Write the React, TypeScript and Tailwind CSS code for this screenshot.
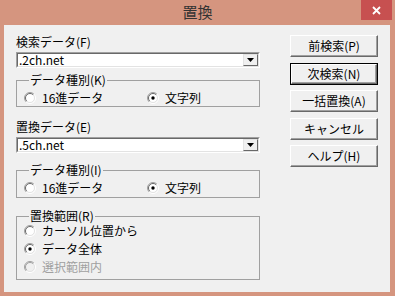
import React from "react";

const font = { fontFamily: '"Noto Sans CJK JP", "Noto Sans", sans-serif' };

function Radio({ checked, disabled }: { checked?: boolean; disabled?: boolean }) {
  return (
    <svg width="12" height="12" viewBox="0 0 12 12" className="shrink-0">
      <circle cx="6" cy="6" r="4.5" fill={disabled ? "#f0f0f0" : "#ffffff"} />
      <path d="M2.1 9.9 A5.5 5.5 0 0 1 9.9 2.1" fill="none" stroke="#a0a0a0" strokeWidth="1" />
      <path d="M9.9 2.1 A5.5 5.5 0 0 1 2.1 9.9" fill="none" stroke="#ffffff" strokeWidth="1" />
      <path d="M2.8 9.2 A4.5 4.5 0 0 1 9.2 2.8" fill="none" stroke={disabled ? "#a0a0a0" : "#696969"} strokeWidth="1" />
      <path d="M9.2 2.8 A4.5 4.5 0 0 1 2.8 9.2" fill="none" stroke="#e3e3e3" strokeWidth="1" />
      {checked && <circle cx="6" cy="6" r="1.7" fill="#000000" />}
    </svg>
  );
}

function Option({ label, checked, disabled }: { label: string; checked?: boolean; disabled?: boolean }) {
  return (
    <div className="flex items-center h-[14px]">
      <Radio checked={checked} disabled={disabled} />
      <span className={"ml-[6px] text-[12px] leading-[14px] " + (disabled ? "text-[#a0a0a0]" : "text-black")}>{label}</span>
    </div>
  );
}

function Combo({ value }: { value: string }) {
  return (
    <div className="h-[16px] w-[244px] flex border-t border-l border-t-[#a0a0a0] border-l-[#a0a0a0] border-b border-r border-b-white border-r-white">
      <div className="flex-1 flex bg-white border-t border-l border-t-[#696969] border-l-[#696969] border-b border-r border-b-[#e3e3e3] border-r-[#e3e3e3]">
        <span className="flex-1 pl-[1px] text-[12px] leading-[12px] text-black">{value}</span>
        <div className="w-[15px] h-[12px] bg-[#f0f0f0] flex items-center justify-center border-t border-l border-t-[#e3e3e3] border-l-[#e3e3e3] border-b border-r border-b-[#696969] border-r-[#696969]">
          <svg width="7" height="4" viewBox="0 0 7 4">
            <path d="M0 0 H7 L3.5 4 Z" fill="#000" />
          </svg>
        </div>
      </div>
    </div>
  );
}

function Group({ title, children, className }: { title: string; children: React.ReactNode; className?: string }) {
  return (
    <fieldset className={"w-[244px] border border-[#a0a0a0] pl-[7px] " + (className ?? "")}>
      <legend className="ml-[5px] px-[1px] text-[12px] leading-[14px] text-black">{title}</legend>
      {children}
    </fieldset>
  );
}

function Button({ label, isDefault }: { label: string; isDefault?: boolean }) {
  return (
    <div className={"w-[88px] h-[22px] " + (isDefault ? "border border-black" : "")}>
      <div className="w-full h-full flex items-center justify-center bg-[#f0f0f0] border-t border-l border-t-white border-l-white border-b border-r border-b-[#696969] border-r-[#696969] shadow-[inset_-1px_-1px_0_#a0a0a0]">
        <span className="text-[12px] leading-[14px] text-black">{label}</span>
      </div>
    </div>
  );
}

export default function App() {
  return (
    <div className="w-[395px] h-[296px] bg-[#d5957f] flex flex-col" style={font}>
      <div className="relative h-[25px] flex items-center justify-center">
        <span className="text-[15px] leading-[20px] text-[#333333] mt-[-1px]">置換</span>
        <div className="absolute top-0 right-[3px] w-[31px] h-[20px] bg-[#c75050] flex items-center justify-center">
          <svg width="9" height="9" viewBox="0 0 9 9">
            <path d="M1 1 L8 8 M8 1 L1 8" stroke="#ffffff" strokeWidth="1.8" />
          </svg>
        </div>
      </div>
      <div className="ml-[4px] w-[386px] h-[267px] bg-[#f0f0f0] flex">
        <div className="ml-[12px] w-[244px] flex flex-col">
          <span className="mt-[10px] text-[12px] leading-[14px] text-black">検索データ(F)</span>
          <div className="mt-[3px]"><Combo value=".2ch.net" /></div>
          <Group title="データ種別(K)" className="mt-[5px] h-[34px]">
            <div className="flex mt-[4px]">
              <div className="w-[123px]"><Option label="16進データ" /></div>
              <Option label="文字列" checked />
            </div>
          </Group>
          <span className="mt-[13px] text-[12px] leading-[14px] text-black">置換データ(E)</span>
          <div className="mt-[3px]"><Combo value=".5ch.net" /></div>
          <Group title="データ種別(I)" className="mt-[10px] h-[35px]">
            <div className="flex mt-[4px]">
              <div className="w-[123px]"><Option label="16進データ" /></div>
              <Option label="文字列" checked />
            </div>
          </Group>
          <Group title="置換範囲(R)" className="mt-[11px] h-[71px]">
            <div className="flex flex-col gap-[4px] mt-[1px]">
              <Option label="カーソル位置から" />
              <Option label="データ全体" checked />
              <Option label="選択範囲内" disabled />
            </div>
          </Group>
        </div>
        <div className="ml-[30px] mt-[10px] flex flex-col gap-[5.5px]">
          <Button label="前検索(P)" />
          <Button label="次検索(N)" isDefault />
          <Button label="一括置換(A)" />
          <Button label="キャンセル" />
          <Button label="ヘルプ(H)" />
        </div>
      </div>
    </div>
  );
}
